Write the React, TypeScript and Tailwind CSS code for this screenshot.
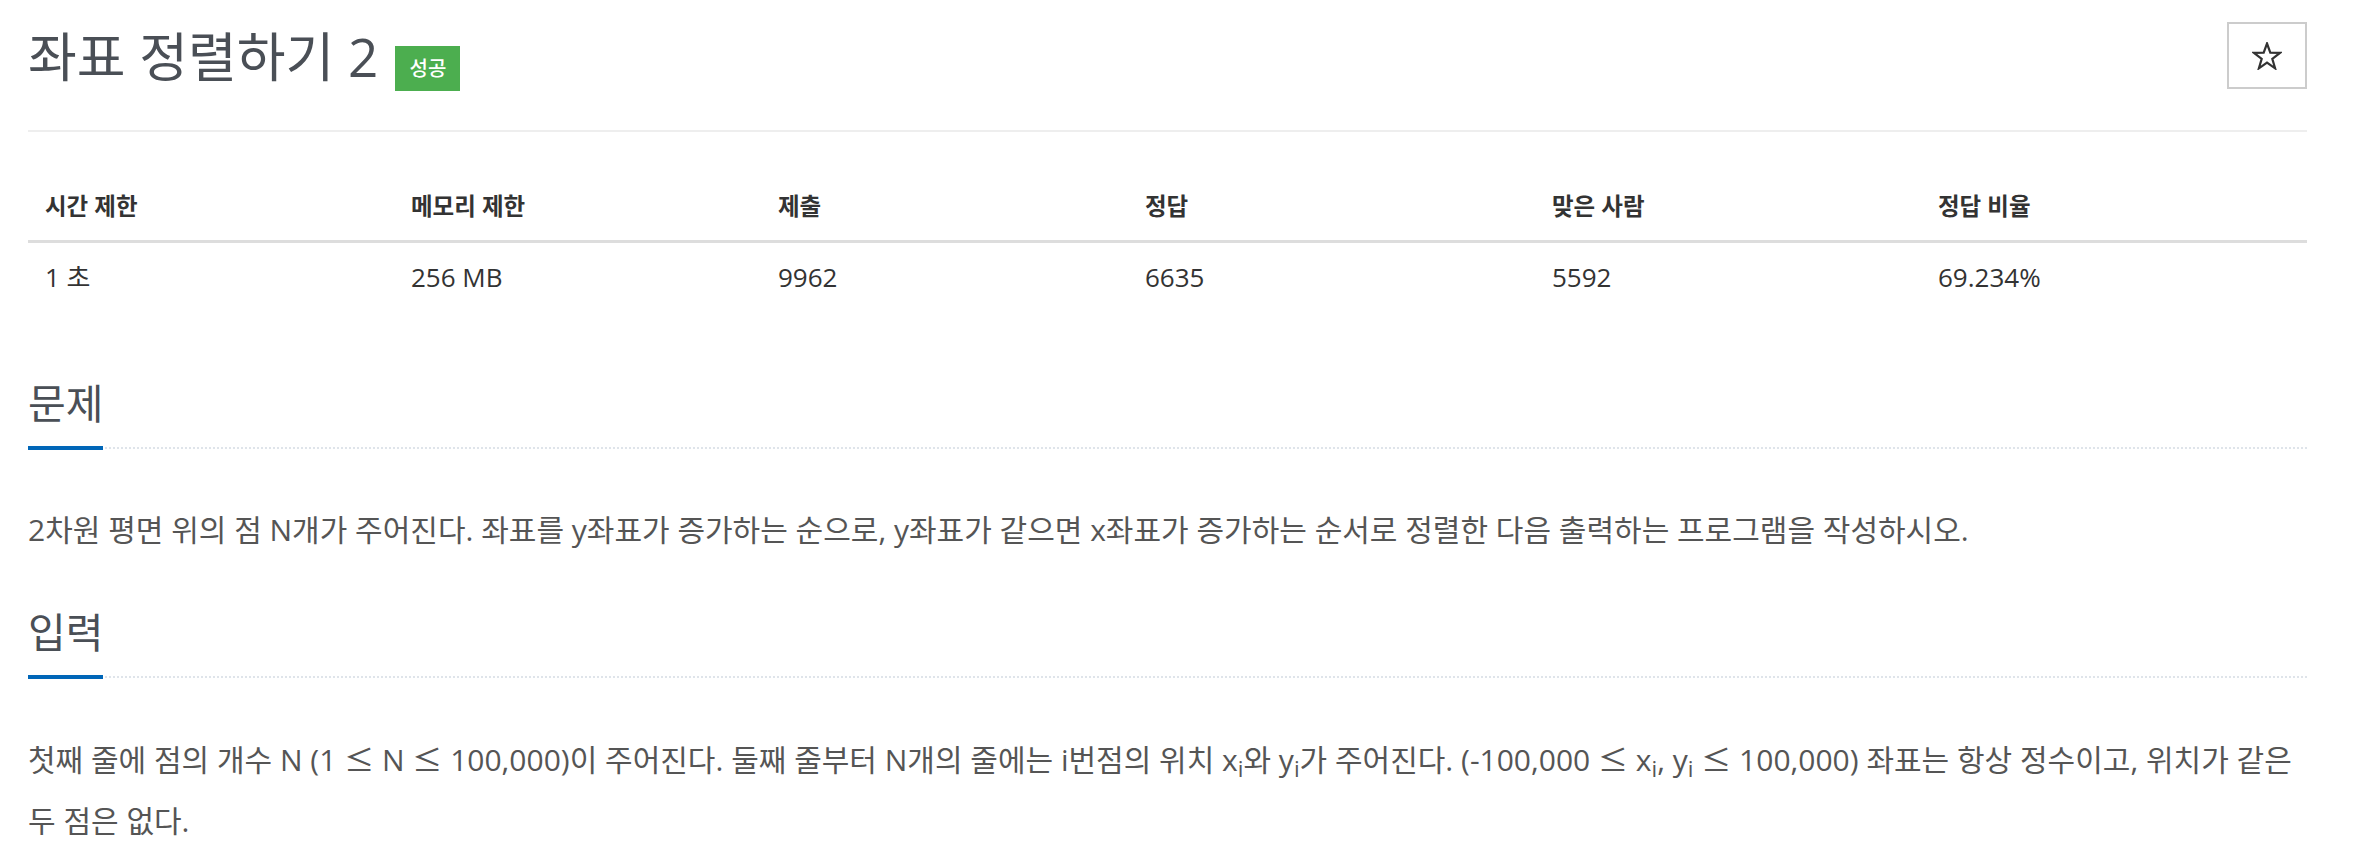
import React from 'react';

const stats = [
  { label: '시간 제한', value: '1 초' },
  { label: '메모리 제한', value: '256 MB' },
  { label: '제출', value: '9962' },
  { label: '정답', value: '6635' },
  { label: '맞은 사람', value: '5592' },
  { label: '정답 비율', value: '69.234%' },
];

const cols = 'grid grid-cols-[366px_367px_367px_407px_386px_1fr]';

const StarIcon = () => (
  <svg width="30" height="28" viewBox="0 0 30 28" fill="none">
    <polygon
      points="15,1.5 18.3,10.6 28,10.8 20.3,16.8 23.1,26.3 15,20.6 6.9,26.3 9.7,16.8 2,10.8 11.7,10.6"
      stroke="#333333"
      strokeWidth="2.2"
      strokeLinejoin="miter"
    />
  </svg>
);

// ≤ comes from the CJK font in the original page, so it is wider than the Open Sans one
const Le = () => <span className="font-['Noto_Sans_CJK_KR',sans-serif]">≤</span>;

const Headline = ({ title, className }: { title: string; className?: string }) => (
  <div className={`flex border-b-2 border-dotted border-[#dfe4ea] ${className ?? ''}`}>
    <h2 className="-mb-[3px] border-b-4 border-[#0066b8] pb-[22px] text-[41px] leading-[41px] font-normal text-[#4a4f56]">
      {title}
    </h2>
  </div>
);

const App: React.FC = () => {
  return (
    <div className="min-h-screen bg-white font-['Open_Sans','Noto_Sans_CJK_KR',sans-serif]">
      <div className="ml-[28px] w-[2279px]">
        {/* Header */}
        <div className="flex h-[132px] items-start justify-between border-b-2 border-[#eeeeee]">
          <div className="flex items-start pt-[30px]">
            <h1 className="text-[53px] leading-[53px] font-normal text-[#4a4f56]">좌표 정렬하기 2</h1>
            <span className="ml-[17px] mt-[16px] flex h-[45px] w-[65px] items-center justify-center bg-[#4cae4f] text-[20px] font-medium text-white">
              성공
            </span>
          </div>
          <button className="mt-[22px] flex h-[67px] w-[80px] items-center justify-center border-2 border-[#cccccc] bg-white">
            <StarIcon />
          </button>
        </div>

        {/* Problem info */}
        <div className="mt-[41px] text-[#333333]">
          <div className={`${cols} h-[70px] items-center border-b-[3px] border-[#dddddd] text-[23.5px] font-bold`}>
            {stats.map((s) => (
              <div key={s.label} className="pl-[17px]">{s.label}</div>
            ))}
          </div>
          <div className={`${cols} h-[68px] items-center text-[26px]`}>
            {stats.map((s) => (
              <div key={s.label} className="pl-[17px]">{s.value}</div>
            ))}
          </div>
        </div>

        {/* 문제 */}
        <Headline title="문제" className="mt-[72px]" />
        <p className="mt-[50px] text-[30px] leading-[61px] text-[#555555]">
          2차원 평면 위의 점 N개가 주어진다. 좌표를 y좌표가 증가하는 순으로, y좌표가 같으면 x좌표가 증가하는 순서로 정렬한 다음 출력하는 프로그램을 작성하시오.
        </p>

        {/* 입력 */}
        <Headline title="입력" className="mt-[52px]" />
        <p className="mt-[50px] text-[30px] leading-[61px] text-[#555555]">
          첫째 줄에 점의 개수 N (1 <Le /> N <Le /> 100,000)이 주어진다. 둘째 줄부터 N개의 줄에는 i번점의 위치 x<sub>i</sub>와 y<sub>i</sub>가 주어진다. (-100,000 <Le /> x<sub>i</sub>, y<sub>i</sub> <Le /> 100,000) 좌표는 항상 정수이고, 위치가 같은 두 점은 없다.
        </p>
      </div>
    </div>
  );
};

export default App;
